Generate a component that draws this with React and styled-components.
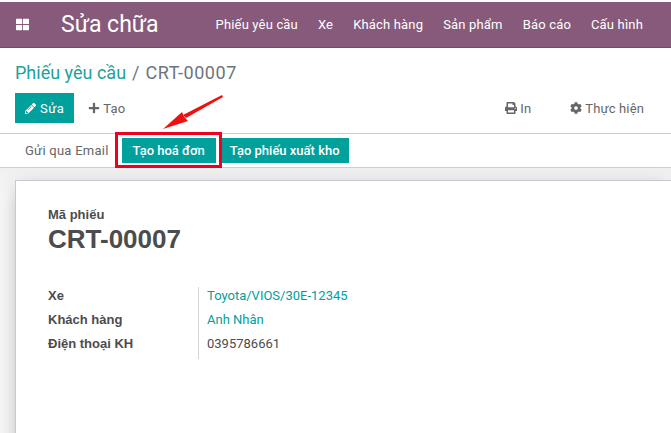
import { Fragment } from 'react';
import styled, { createGlobalStyle } from 'styled-components';
import { FaPencilAlt, FaPlus, FaPrint, FaCog, FaThLarge } from 'react-icons/fa';

const GlobalStyle = createGlobalStyle`
  html, body {
    margin: 0;
    padding: 0;
    background: #fff;
  }
  body {
    font-family: Roboto, "Liberation Sans", sans-serif;
    font-size: 13px;
    color: #4c4c4c;
  }
`

const Page = styled.div`
  position: relative;
  width: 671px;
  height: 433px;
  overflow: hidden;
  background: #fff;
`

const Navbar = styled.nav`
  display: flex;
  align-items: center;
  height: 45px;
  margin-top: 2px;
  background: #875a7b;
  border-bottom: 1px solid #6f4c66;
  color: #fff;
`

const AppsToggle = styled.span`
  display: flex;
  width: 13px;
  margin-left: 16px;
  font-size: 13px;
`

const Brand = styled.span`
  margin-left: 32px;
  font-size: 23px;
  line-height: 1;
`

const Menu = styled.div`
  display: flex;
  gap: 20px;
  margin-left: auto;
  margin-right: 28px;
  font-size: 13px;
  letter-spacing: 0.17px;
`

const ControlPanel = styled.div`
  padding: 14px 15px 0;
  height: 86px;
  box-sizing: border-box;
  border-bottom: 1px solid #cfcfcf;
`

const Breadcrumb = styled.div`
  display: flex;
  gap: 6px;
  font-size: 18px;
  line-height: 21px;
  color: #6c757d;

  a {
    color: #21a19c;
  }

  span:last-child {
    letter-spacing: 0.55px;
  }
`

const ActionRow = styled.div`
  display: flex;
  align-items: center;
  margin-top: 10px;
`

const PrimaryButton = styled.button`
  display: flex;
  align-items: center;
  gap: 4px;
  height: 30px;
  padding: 0 10px;
  border: 0;
  background: #00a09d;
  color: #fff;
  font: inherit;
  font-size: 13px;
  letter-spacing: 0.5px;
`

const GhostButton = styled.button`
  display: flex;
  align-items: center;
  gap: 3px;
  padding: 0;
  margin-left: ${(p) => p.$gap}px;
  border: 0;
  background: none;
  color: #666;
  font: inherit;
  font-size: 13px;
  letter-spacing: 0.15px;

  svg {
    font-size: 12px;
  }
`

const Spacer = styled.div`
  flex: 1;
`

const EndGap = styled.div`
  flex: 0 0 12px;
`

const StatusBar = styled.div`
  display: flex;
  align-items: center;
  gap: 5px;
  height: 34px;
  padding-left: 25px;
  box-sizing: border-box;
  border-bottom: 1px solid #cfcfcf;
`

const PlainAction = styled.span`
  margin-right: 8px;
  color: #666;
  font-size: 13px;
  letter-spacing: 0.25px;
`

const ActionButton = styled.button`
  height: 25px;
  padding: 0 ${(p) => p.$pad}px;
  border: 0;
  background: #00a09d;
  color: #fff;
  font: inherit;
  font-size: 13px;
  font-weight: 500;
`

const Content = styled.div`
  height: 266px;
  padding: 12px 0 0 15px;
  box-sizing: border-box;
  background: linear-gradient(#f0f0f0, #f7f7f7 30px);
`

const Sheet = styled.div`
  height: 300px;
  padding: 27px 32px;
  box-sizing: border-box;
  background: #fff;
  border: 1px solid #c9c9d6;
  border-right: 0;
  box-shadow: 0 5px 20px -5px rgba(0, 0, 0, 0.35);
`

const FieldLabel = styled.div`
  font-family: "Liberation Sans", sans-serif;
  font-weight: 700;
  font-size: 13px;
  line-height: 14px;
`

const Title = styled.h1`
  margin: 0;
  font-family: "Liberation Sans", sans-serif;
  font-weight: 700;
  font-size: 26px;
  line-height: 35px;
`

const InfoGrid = styled.div`
  display: grid;
  grid-template-columns: 150px auto;
  justify-content: start;
  margin-top: 30px;
`

const InfoLabel = styled.div`
  height: 24px;
  line-height: 18px;
  font-family: "Liberation Sans", sans-serif;
  font-weight: 700;
  font-size: 13px;
`

const InfoValue = styled.div`
  height: 24px;
  line-height: 18px;
  padding-left: 8px;
  border-left: 1px solid #d4d4d4;
  font-size: 13px;
  color: ${(p) => (p.$link ? '#00a09d' : '#4c4c4c')};
`

const Highlight = styled.div`
  position: absolute;
  left: 115px;
  top: 132px;
  width: 107px;
  height: 36px;
  box-sizing: border-box;
  border: 3px solid #f00020;
`

const Arrow = styled.svg`
  position: absolute;
  left: 160px;
  top: 92px;
`

const menuItems = ['Phiếu yêu cầu', 'Xe', 'Khách hàng', 'Sản phẩm', 'Báo cáo', 'Cấu hình'];

const info = [
  { label: 'Xe', value: 'Toyota/VIOS/30E-12345', link: true },
  { label: 'Khách hàng', value: 'Anh Nhân', link: true },
  { label: 'Điện thoại KH', value: '0395786661' },
];

export default function App() {
  return (
    <Page>
      <GlobalStyle />
      <Navbar>
        <AppsToggle><FaThLarge /></AppsToggle>
        <Brand>Sửa chữa</Brand>
        <Menu>
          {menuItems.map((item) => <span key={item}>{item}</span>)}
        </Menu>
      </Navbar>
      <ControlPanel>
        <Breadcrumb>
          <a>Phiếu yêu cầu</a>
          <span>/</span>
          <span>CRT-00007</span>
        </Breadcrumb>
        <ActionRow>
          <PrimaryButton><FaPencilAlt size={11} /> Sửa</PrimaryButton>
          <GhostButton $gap={14}><FaPlus /> Tạo</GhostButton>
          <Spacer />
          <GhostButton $gap={0}><FaPrint /> In</GhostButton>
          <GhostButton $gap={39}><FaCog /> Thực hiện</GhostButton>
          <EndGap />
        </ActionRow>
      </ControlPanel>
      <StatusBar>
        <PlainAction>Gửi qua Email</PlainAction>
        <ActionButton $pad={11}>Tạo hoá đơn</ActionButton>
        <ActionButton $pad={9}>Tạo phiếu xuất kho</ActionButton>
      </StatusBar>
      <Content>
        <Sheet>
          <FieldLabel>Mã phiếu</FieldLabel>
          <Title>CRT-00007</Title>
          <InfoGrid>
            {info.map((row) => (
              <Fragment key={row.label}>
                <InfoLabel>{row.label}</InfoLabel>
                <InfoValue $link={row.link}>{row.value}</InfoValue>
              </Fragment>
            ))}
          </InfoGrid>
        </Sheet>
      </Content>
      <Highlight />
      <Arrow width="70" height="42" viewBox="0 0 70 42">
        <path d="M62 3 L23 23 L26 26 L63 5 Z" fill="#f01010" />
        <path d="M3 37 L22 20 L24 24.5 L28 29 Z" fill="#f01010" />
      </Arrow>
    </Page>
  );
}
